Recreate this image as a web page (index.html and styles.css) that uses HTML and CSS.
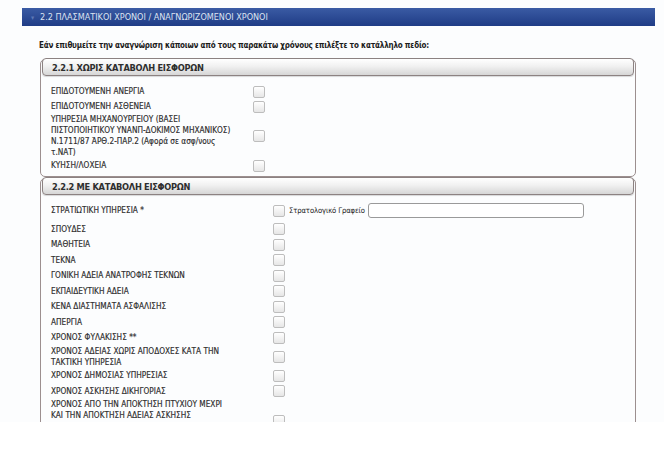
FILE: index.html
```html
<!DOCTYPE html>
<html lang="el">
<head>
    <meta charset="UTF-8">
    <title>Πλασματικοί χρόνοι</title>
    <link rel="stylesheet" href="styles.css">
</head>
<body>
<div class="page">
    <div class="panel">
        <div class="panel-head"><span class="arrow">&#9662;</span>2.2 ΠΛΑΣΜΑΤΙΚΟΙ ΧΡΟΝΟΙ / ΑΝΑΓΝΩΡΙΖΟΜΕΝΟΙ ΧΡΟΝΟΙ</div>

        <p class="intro">Εάν επιθυμείτε την αναγνώριση κάποιων από τους παρακάτω χρόνους επιλέξτε το κατάλληλο πεδίο:</p>

        <div class="group group-free">
            <div class="group-title">2.2.1 ΧΩΡΙΣ ΚΑΤΑΒΟΛΗ ΕΙΣΦΟΡΩΝ</div>
            <div class="group-body">
                <div class="row"><span class="label">ΕΠΙΔΟΤΟΥΜΕΝΗ ΑΝΕΡΓΙΑ</span><span class="check"></span></div>
                <div class="row"><span class="label">ΕΠΙΔΟΤΟΥΜΕΝΗ ΑΣΘΕΝΕΙΑ</span><span class="check"></span></div>
                <div class="row"><span class="label">ΥΠΗΡΕΣΙΑ ΜΗΧΑΝΟΥΡΓΕΙΟΥ (ΒΑΣΕΙ<br>ΠΙΣΤΟΠΟΙΗΤΙΚΟΥ ΥΝΑΝΠ-ΔΟΚΙΜΟΣ ΜΗΧΑΝΙΚΟΣ)<br>Ν.1711/87 ΆΡΘ.2-ΠΑΡ.2 (Αφορά σε ασφ/νους<br>τ.ΝΑΤ)</span><span class="check"></span></div>
                <div class="row"><span class="label">ΚΥΗΣΗ/ΛΟΧΕΙΑ</span><span class="check"></span></div>
            </div>
        </div>

        <div class="group group-paid">
            <div class="group-title">2.2.2 ΜΕ ΚΑΤΑΒΟΛΗ ΕΙΣΦΟΡΩΝ</div>
            <div class="group-body">
                <div class="row row-field">
                    <span class="label">ΣΤΡΑΤΙΩΤΙΚΗ ΥΠΗΡΕΣΙΑ *</span>
                    <span class="check"></span>
                    <span class="field-label">Στρατολογικό Γραφείο</span>
                    <input class="text-input" type="text">
                </div>
                <div class="row"><span class="label">ΣΠΟΥΔΕΣ</span><span class="check"></span></div>
                <div class="row"><span class="label">ΜΑΘΗΤΕΙΑ</span><span class="check"></span></div>
                <div class="row"><span class="label">ΤΕΚΝΑ</span><span class="check"></span></div>
                <div class="row"><span class="label">ΓΟΝΙΚΗ ΑΔΕΙΑ ΑΝΑΤΡΟΦΗΣ ΤΕΚΝΩΝ</span><span class="check"></span></div>
                <div class="row"><span class="label">ΕΚΠΑΙΔΕΥΤΙΚΗ ΑΔΕΙΑ</span><span class="check"></span></div>
                <div class="row"><span class="label">ΚΕΝΑ ΔΙΑΣΤΗΜΑΤΑ ΑΣΦΑΛΙΣΗΣ</span><span class="check"></span></div>
                <div class="row"><span class="label">ΑΠΕΡΓΙΑ</span><span class="check"></span></div>
                <div class="row"><span class="label">ΧΡΟΝΟΣ ΦΥΛΑΚΙΣΗΣ **</span><span class="check"></span></div>
                <div class="row"><span class="label">ΧΡΟΝΟΣ ΑΔΕΙΑΣ ΧΩΡΙΣ ΑΠΟΔΟΧΕΣ ΚΑΤΑ ΤΗΝ<br>ΤΑΚΤΙΚΗ ΥΠΗΡΕΣΙΑ</span><span class="check"></span></div>
                <div class="row"><span class="label">ΧΡΟΝΟΣ ΔΗΜΟΣΙΑΣ ΥΠΗΡΕΣΙΑΣ</span><span class="check"></span></div>
                <div class="row"><span class="label">ΧΡΟΝΟΣ ΑΣΚΗΣΗΣ ΔΙΚΗΓΟΡΙΑΣ</span><span class="check"></span></div>
                <div class="row"><span class="label">ΧΡΟΝΟΣ ΑΠΟ ΤΗΝ ΑΠΟΚΤΗΣΗ ΠΤΥΧΙΟΥ ΜΕΧΡΙ<br>ΚΑΙ ΤΗΝ ΑΠΟΚΤΗΣΗ ΑΔΕΙΑΣ ΑΣΚΗΣΗΣ<br>ΕΠΑΓΓΕΛΜΑΤΟΣ ΑΣΦΑΛΙΣΜΕΝΩΝ ΤΟΥ ΤΟΜΕΑ<br>ΜΗΧΑΝΙΚΩΝ</span><span class="check"></span></div>
            </div>
        </div>
    </div>
</div>
</body>
</html>
```

FILE: styles.css
```css
body {
    margin: 0;
    background: #fff;
    font-family: "DejaVu Sans Condensed", "DejaVu Sans", sans-serif;
    font-stretch: condensed;
    color: #2c2c2c;
}
.page {
    height: 422px;
    overflow: hidden;
    padding: 8px 9px 0 22px;
    box-sizing: border-box;
    background: #fcfdfe;
}
.panel-head {
    height: 18px;
    line-height: 18px;
    padding-left: 9px;
    background: linear-gradient(#3a5ba4, #1f3c86);
    color: #dce3f1;
    font-size: 9px;
}
.arrow {
    display: inline-block;
    width: 9px;
    color: #5d78b6;
    font-size: 7px;
}
.intro {
    margin: 14px 0 0 17px;
    line-height: 11px;
    font-size: 8px;
    letter-spacing: -0.2px;
    font-weight: bold;
    color: #1c1c1c;
}
.group {
    margin: 8px 0 0 18px;
    width: 596px;
    border: 1px solid #9c8f8f;
    border-radius: 5px;
    box-sizing: border-box;
}
.group + .group {
    margin-top: 1px;
}
.group-title {
    height: 18px;
    line-height: 17px;
    margin: -2px 1px 0;
    padding-left: 9px;
    box-sizing: border-box;
    border: 1px solid #8c8282;
    border-radius: 4px;
    background: linear-gradient(#ffffff, #f1f1f1 45%, #d6d6d6);
    box-shadow: 0 1px 1px rgba(0, 0, 0, 0.15);
    font-size: 9.2px;
    letter-spacing: -0.3px;
    font-weight: bold;
    color: #2e2e2e;
}
.group-body {
    padding: 8px 0 3px 10px;
}
.group-paid .group-body {
    padding-top: 5px;
}
.row {
    display: grid;
    grid-template-columns: 202px 12px;
    justify-content: start;
    align-items: center;
    min-height: 15px;
    line-height: 11px;
    font-size: 8.2px;
}
.group-paid .row {
    grid-template-columns: 222px 12px;
    min-height: 15.5px;
    padding: 0.25px 0;
    box-sizing: border-box;
}
.group-paid .row-field {
    grid-template-columns: 222px 12px max-content 216px;
    min-height: 21.5px;
}
.label {
    white-space: nowrap;
    -webkit-text-stroke: 0.15px #2c2c2c;
}
.check {
    width: 12px;
    height: 12px;
    box-sizing: border-box;
    border: 1px solid #bdbdbd;
    border-radius: 2px;
    background: linear-gradient(#ffffff, #e6e6e6);
}
.field-label {
    padding: 0 3px 0 4px;
    font-size: 7.6px;
    letter-spacing: -0.1px;
    color: #222;
}
.text-input {
    height: 15px;
    margin: 0;
    padding: 0;
    box-sizing: border-box;
    border: 1px solid #9a9a9a;
    border-radius: 3px;
    background: #fff;
}
```
